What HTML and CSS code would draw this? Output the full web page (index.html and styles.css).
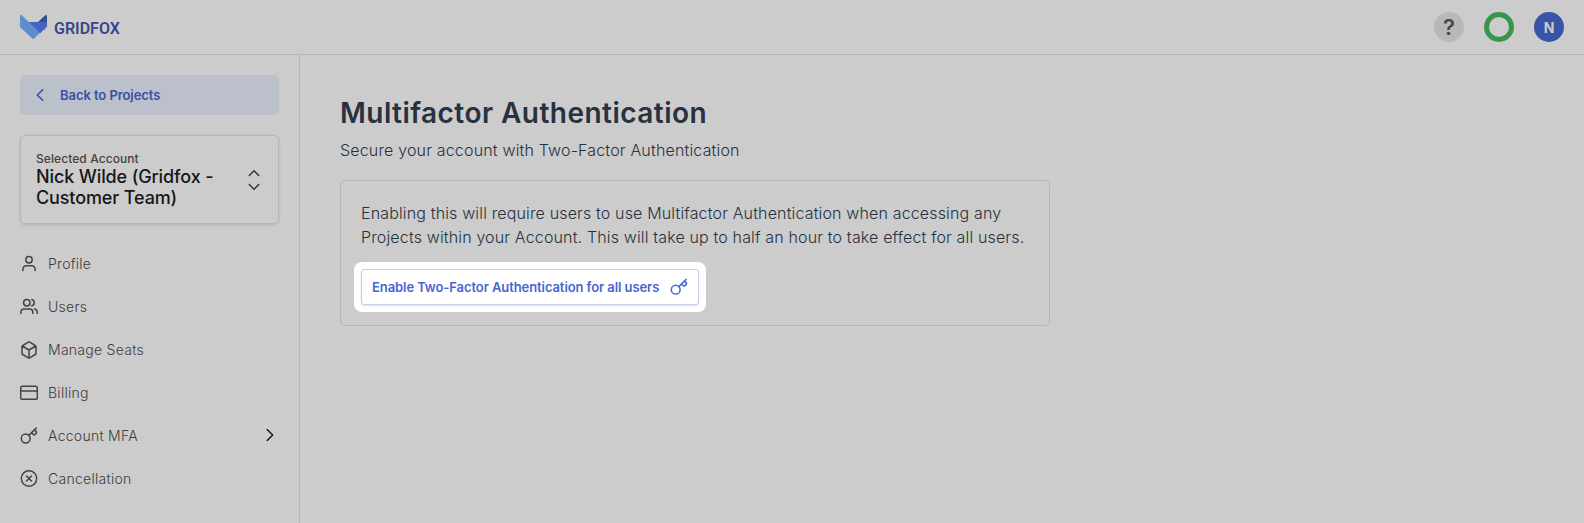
FILE: index.html
```html
<!DOCTYPE html>
<html lang="en">
<head>
<meta charset="utf-8">
<title>Multifactor Authentication - Gridfox</title>
<link rel="stylesheet" href="styles.css">
</head>
<body>
<header class="topbar">
  <div class="brand">
    <svg class="brand-mark" viewBox="0 0 27 24"><path fill="#365093" d="M18 7 25.500 0 27 .5V11l-3 4z"/><path fill="#4564c4" d="M8 7h18.700v4.500L20 18.500z"/><path fill="#5f8ccb" d="M0 .3 1.500 0 20 17.800 14.200 23.600q-1 .8-2 0L0 12z"/></svg>
    <span class="brand-name">GRIDFOX</span>
  </div>
  <div class="tools">
    <span class="round help">?</span>
    <span class="round ring"></span>
    <span class="round avatar">N</span>
  </div>
</header>
<div class="shell">
  <aside class="sidebar">
    <a class="back"><svg class="back-icon" viewBox="0 0 8 12"><path d="M6.700.7 1.300 6l5.400 5.300"/></svg><span>Back to Projects</span></a>
    <div class="account">
      <div class="account-text">
        <div class="account-label">Selected Account</div>
        <div class="account-name">Nick Wilde (Gridfox - Customer Team)</div>
      </div>
      <svg class="account-icon" viewBox="0 0 12 22"><path d="M1.300 6.500 6 1.800l4.700 4.700M1.300 15.500 6 20.200l4.700-4.700"/></svg>
    </div>
    <nav class="nav">
      <a class="item"><svg class="icon" viewBox="0 0 18 18"><circle cx="9" cy="4.700" r="3.200"/><path d="M2.900 15.500v-1.300a3.400 3.400 0 0 1 3.400-3.400h5.400a3.400 3.400 0 0 1 3.400 3.400v1.300"/></svg><span>Profile</span></a>
      <a class="item"><svg class="icon" viewBox="0 0 18 18"><circle cx="6.800" cy="4.700" r="3.200"/><path d="M.9 15.500v-1.300a3.300 3.300 0 0 1 3.300-3.300h5.300a3.300 3.300 0 0 1 3.300 3.300v1.300M11.800 1.600a3.200 3.200 0 0 1 0 6.200M14.500 11a3.300 3.300 0 0 1 2.700 3.200v1.300"/></svg><span>Users</span></a>
      <a class="item"><svg class="icon" viewBox="0 0 18 18"><path d="M16 12.200V5.800a1.500 1.500 0 0 0-.8-1.300L9.750 1.200a1.500 1.500 0 0 0-1.500 0L2.800 4.500A1.500 1.500 0 0 0 2 5.800v6.400a1.500 1.500 0 0 0 .8 1.300l5.450 3.300a1.500 1.500 0 0 0 1.500 0l5.450-3.300a1.500 1.500 0 0 0 .8-1.300zM2.200 5 9 9l6.800-4M9 17V9"/></svg><span>Manage Seats</span></a>
      <a class="item"><svg class="icon" viewBox="0 0 18 18"><rect x=".7" y="2.300" width="16.600" height="13" rx="1.500"/><path d="M.7 7h16.600"/></svg><span>Billing</span></a>
      <a class="item"><svg class="icon" viewBox="0 0 18 18"><circle cx="5.700" cy="11.500" r="4.400"/><path d="M8.900 8.400 16.200 1.100M11.600 5.700l1.900 2h1.200l1.800-1.800V4.700l-1.900-2"/></svg><span>Account MFA</span><svg class="more" viewBox="0 0 8 12"><path d="m1.200.6 5.500 5.400-5.500 5.400"/></svg></a>
      <a class="item"><svg class="icon" viewBox="0 0 18 18"><circle cx="9" cy="8.500" r="7.700"/><path d="m6.500 6 5 5m0-5-5 5"/></svg><span>Cancellation</span></a>
    </nav>
  </aside>
  <main class="content">
    <h1 class="title">Multifactor Authentication</h1>
    <p class="subtitle">Secure your account with Two-Factor Authentication</p>
    <section class="panel">
      <p class="panel-text">Enabling this will require users to use Multifactor Authentication when accessing any<br>Projects within your Account. This will take up to half an hour to take effect for all users.</p>
      <div class="spotlight">
        <button class="enable"><span>Enable Two-Factor Authentication for all users</span><svg class="enable-icon" viewBox="0 0 18 18"><circle cx="5.700" cy="11.700" r="4.400"/><path d="M8.900 8.600 16.200 1.300M11.600 5.900l1.900 2h1.200l1.800-1.800V4.900l-1.900-2"/></svg></button>
      </div>
    </section>
  </main>
</div>
</body>
</html>
```

FILE: styles.css
```css
* { box-sizing: border-box; }
body {
  margin: 0;
  height: 523px;
  overflow: hidden;
  display: flex;
  flex-direction: column;
  background: #ccc;
  color: #27313f;
  font-family: Inter, "Liberation Sans", sans-serif;
}
svg { flex: none; fill: none; stroke: currentColor; stroke-linecap: round; stroke-linejoin: round; }
.topbar {
  height: 55px;
  flex: none;
  display: flex;
  align-items: center;
  justify-content: space-between;
  padding: 0 20px;
  border-bottom: 1px solid #b5b6b7;
}
.brand { display: flex; align-items: center; gap: 7px; }
.brand-mark { width: 27px; height: 24px; stroke: none; }
.brand-name { font: 600 16px/20px Roboto, sans-serif; color: #36468c; padding-top: 3px; }
.tools { display: flex; gap: 20px; }
.round { width: 30px; height: 30px; border-radius: 50%; display: flex; align-items: center; justify-content: center; }
.help { background: #b8b8b8; color: #484848; font: 600 22px/30px Inter, sans-serif; }
.ring { border: 5px solid #3a9449; }
.avatar { background: #3854a6; color: #ccc; font-size: 14px; font-weight: 700; }
.shell { flex: 1; display: flex; min-height: 0; }
.sidebar { width: 300px; flex: none; padding: 20px; border-right: 1px solid #b5b6b7; }
.back {
  display: flex;
  align-items: center;
  gap: 16px;
  height: 40px;
  padding-left: 16px;
  border-radius: 5px;
  background: #bbc0ca;
  color: #3a50a2;
  font-size: 13px;
  font-weight: 600;
  letter-spacing: -.07px;
}
.back-icon { width: 8px; height: 12px; stroke-width: 1.6; }
.account {
  display: flex;
  align-items: center;
  justify-content: space-between;
  height: 89px;
  margin-top: 20px;
  padding: 0 18px 0 15px;
  border: 1px solid #b5b6b7;
  border-radius: 5px;
  box-shadow: 0 1px 3px rgba(0, 0, 0, .12);
}
.account-text { padding-bottom: 1px; }
.account-label { font-size: 12px; font-weight: 500; line-height: 15px; color: #414141; letter-spacing: .08px; }
.account-name { width: 190px; font-size: 18px; font-weight: 500; line-height: 21px; color: #171717; letter-spacing: -.12px; }
.account-icon { width: 12px; height: 22px; stroke-width: 1.4; color: #27313f; }
.nav { margin-top: 18px; }
.item { display: flex; align-items: center; height: 43px; gap: 10px; font-size: 14px; font-weight: 350; color: #3d3d3d; letter-spacing: .27px; }
.icon { width: 18px; height: 18px; stroke-width: 1.5; color: #434343; }
.more { width: 8px; height: 12px; margin: 0 5px 1px auto; color: #111; stroke-width: 1.4; }
.content { padding: 40px; }
.title { margin: 0; font-size: 28px; font-weight: 600; line-height: 36px; color: #27313f; letter-spacing: .46px; }
.subtitle { margin: 7px 0 0; font-size: 16px; font-weight: 300; line-height: 24px; letter-spacing: .17px; }
.panel { width: 710px; height: 146px; margin-top: 18px; padding: 20px; border: 1px solid #b5b6b7; border-radius: 5px; }
.panel-text { margin: 0; font-size: 16px; font-weight: 300; line-height: 24px; letter-spacing: .15px; white-space: nowrap; }
.spotlight { width: 352px; height: 50px; margin: 13px 0 0 -7px; padding: 7px; border-radius: 8px; background: #fff; }
.enable {
  display: flex;
  align-items: center;
  justify-content: space-between;
  width: 338px;
  height: 36px;
  padding: 0 10px;
  border: 1px solid #c3cdf0;
  border-radius: 3px;
  background: #fff;
  box-shadow: 0 1px 2px rgba(0, 0, 0, .12);
  color: #4766d0;
  font: 600 13px/16px Inter, sans-serif;
  letter-spacing: -.085px;
  white-space: nowrap;
}
.enable-icon { width: 18px; height: 18px; stroke-width: 1.5; }
```
